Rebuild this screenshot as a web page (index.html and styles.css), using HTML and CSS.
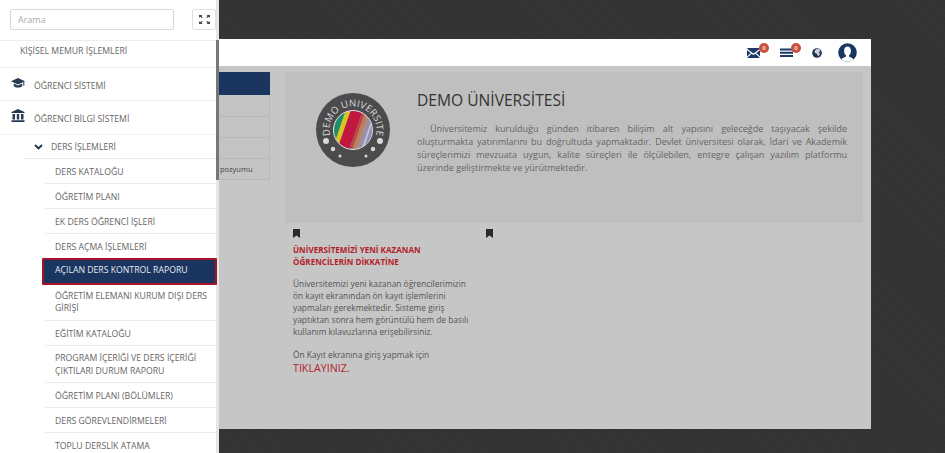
FILE: index.html
```html
<!DOCTYPE html>
<html lang="tr">
<head>
<meta charset="utf-8">
<title>Demo Üniversitesi</title>
<link rel="stylesheet" href="styles.css">
</head>
<body>
<div class="page">
  <header class="topbar">
    <span class="tool tool-mail">
      <svg width="13" height="10" viewBox="0 0 13 10"><path d="M0 .8 1 0h11l1 .8-6.500 4.700z" fill="#1b3a68"/><path d="M0 2.300l3.800 2.700L0 8.500zM13 2.300 9.200 5 13 8.500zM0 10 4.600 5.800l1.900 1.300 1.900-1.300L13 10z" fill="#1b3a68"/></svg>
      <b class="badge">0</b>
    </span>
    <span class="tool tool-list">
      <svg width="13" height="10" viewBox="0 0 13 10"><path d="M0 .5h13v2H0zM0 3.800h13v2H0zM0 7.100h13v2H0z" fill="#1b3a68"/></svg>
      <b class="badge badge-list">0</b>
    </span>
    <svg class="tool-globe" width="10" height="10" viewBox="0 0 10 10"><circle cx="5" cy="5" r="4.800" fill="#1f3350"/><path d="M4 1.200 7 .8l1.500 2L7 4.200l1 2-2 2.300-1-2.500-2-1L2.500 3z" fill="#c9ced6"/></svg>
    <svg class="tool-user" width="19" height="19" viewBox="0 0 19 19"><defs><clipPath id="av"><circle cx="9.500" cy="9.500" r="9.300"/></clipPath></defs><circle cx="9.500" cy="9.500" r="9.300" fill="#173663"/><g clip-path="url(#av)" fill="#fff"><ellipse cx="9.500" cy="8" rx="3.400" ry="4.600"/><path d="M8 11h3v2.500l4 2V19H4v-3.500l4-2z"/></g></svg>
  </header>
  <main class="content">
    <aside class="leftcol">
      <div class="lc-head"></div>
      <div class="lc-row lc-first"></div>
      <div class="lc-row"></div>
      <div class="lc-row"></div>
      <div class="lc-row lc-text">pozyumu</div>
    </aside>
    <div class="maincol">
      <section class="hero">
        <svg class="logo" width="74" height="74" viewBox="0 0 74 74">
          <defs>
            <clipPath id="inner"><circle cx="37" cy="37" r="19"/></clipPath>
            <path id="arc" d="M21.900 55A23.500 23.500 0 1 1 52.100 55"/>
          </defs>
          <circle cx="37" cy="37" r="37" fill="#4b4b4d"/>
          <text class="logo-text"><textPath href="#arc" startOffset="50%" text-anchor="middle">DEMO UNIVERSITE</textPath></text>
          <g clip-path="url(#inner)">
            <rect x="15" y="15" width="44" height="44" fill="#8f90bb"/>
            <path d="M14 14h17L15 60H0z" fill="#1c8f6a"/>
            <path d="M31 14h5L20 60h-5z" fill="#d7c61d"/>
            <path d="M36 14h12L32 60H20z" fill="#c3173f"/>
            <path d="M48 14h3L35 60h-3z" fill="#b5484a"/>
            <path d="M51 14h3L38 60h-3z" fill="#c97b45"/>
            <path d="M54 14h4L42 60h-4z" fill="#a98a8f"/>
            <path d="M60 14h2L46 60h-2z" fill="#c8c2cf"/>
          </g>
          <circle cx="37" cy="37" r="19.500" fill="none" stroke="#e5e5e5" stroke-width="1"/>
          <g fill="#d8d8d8"><circle cx="10" cy="48" r="3"/><circle cx="64" cy="48" r="3"/><circle cx="17" cy="56" r="2.200"/><circle cx="57" cy="56" r="2.200"/><circle cx="24" cy="63" r="1.500"/><circle cx="50" cy="63" r="1.500"/></g>
        </svg>
        <div class="hero-body">
          <h1 class="hero-title">DEMO ÜNİVERSİTESİ</h1>
          <p class="hero-text">
            <span class="line line-first">Üniversitemiz kurulduğu günden itibaren bilişim alt yapısını geleceğde taşıyacak şekilde</span>
            <span class="line">oluşturmakta yatırımlarını bu doğrultuda yapmaktadır. Devlet üniversitesi olarak, İdari ve Akademik</span>
            <span class="line">süreçlerimizi mevzuata uygun, kalite süreçleri ile ölçülebilen, entegre çalışan yazılım platformu</span>
            <span class="line line-last">üzerinde geliştirmekte ve yürütmektedir.</span>
          </p>
        </div>
      </section>
      <div class="news">
        <article class="news-col">
          <svg class="bookmark" width="7" height="9" viewBox="0 0 7 9"><path d="M0 0h7v9L3.500 6.500 0 9z" fill="#2a2a2a"/></svg>
          <h2 class="news-title">ÜNİVERSİTEMİZİ YENİ KAZANAN<br>ÖĞRENCİLERİN DİKKATİNE</h2>
          <p class="news-text">Üniversitemizi yeni kazanan öğrencilerimizin<br>ön kayıt ekranından ön kayıt işlemlerini<br>yapmaları gerekmektedir. Sisteme giriş<br>yaptıktan sonra hem görüntülü hem de basılı<br>kullanım kılavuzlarına erişebilirsiniz.</p>
          <p class="news-text news-last">Ön Kayıt ekranına giriş yapmak için</p>
          <a class="news-link">TIKLAYINIZ.</a>
        </article>
        <article class="news-col">
          <svg class="bookmark" width="7" height="9" viewBox="0 0 7 9"><path d="M0 0h7v9L3.500 6.500 0 9z" fill="#2a2a2a"/></svg>
        </article>
      </div>
    </div>
  </main>
</div>

<nav class="sidebar">
  <div class="scrolltrack"><div class="scrollthumb"></div></div>
  <div class="search-row">
    <input class="search" type="text" placeholder="Arama">
    <button class="expand" aria-label="Tam ekran">
      <svg width="11" height="9" viewBox="0 0 11 9"><path d="M0 0h3.500L2.500 1l1.200 1.200-.8.800L1 1.800 0 3zM11 0H7.500l1 1-1.200 1.200.8.800L10 1.800 11 3zM0 9h3.500l-1-1 1.200-1.200-.8-.8L1 7.200 0 6zM11 9H7.500l1-1-1.200-1.200.8-.8L10 7.200l1-1.200z" fill="#3f4750"/></svg>
    </button>
  </div>
  <div class="menu-top menu-plain">KİŞİSEL MEMUR İŞLEMLERİ</div>
  <div class="menu-top menu-sys">
    <svg class="menu-icon" width="14" height="11" viewBox="0 0 14 11"><path d="M7 0 0 3.200 7 6.400l7-3.200zM2.800 5.600v2.600C4 10 10 10 11.200 8.200V5.600L7 7.600z" fill="#263a50"/><path d="M12.800 3.800v4" stroke="#263a50"/></svg>
    <span>ÖĞRENCİ SİSTEMİ</span>
  </div>
  <div class="menu-top menu-bilgi">
    <svg class="menu-icon" width="14" height="13" viewBox="0 0 14 13"><path d="M7 0 .5 3v1h13V3zM1.500 5h2.500v5.500H1.500zM5.800 5h2.400v5.500H5.800zM10 5h2.500v5.500H10zM.5 11.300h13V13H.5z" fill="#263a50"/></svg>
    <span>ÖĞRENCİ BİLGİ SİSTEMİ</span>
  </div>
  <div class="menu-group">
    <svg width="9" height="6" viewBox="0 0 9 6"><path d="M1 1l3.500 3.500L8 1" fill="none" stroke="#1f3350" stroke-width="1.800"/></svg>
    <span>DERS İŞLEMLERİ</span>
  </div>
  <ul class="submenu">
    <li class="sub">DERS KATALOĞU</li>
    <li class="sub">ÖĞRETİM PLANI</li>
    <li class="sub">EK DERS ÖĞRENCİ İŞLERİ</li>
    <li class="sub">DERS AÇMA İŞLEMLERİ</li>
    <li class="sub active">AÇILAN DERS KONTROL RAPORU</li>
    <li class="sub sub-two">ÖĞRETİM ELEMANI KURUM DIŞI DERS GİRİŞİ</li>
    <li class="sub">EĞİTİM KATALOĞU</li>
    <li class="sub sub-two sub-tall">PROGRAM İÇERİĞİ VE DERS İÇERİĞİ ÇIKTILARI DURUM RAPORU</li>
    <li class="sub">ÖĞRETİM PLANI (BÖLÜMLER)</li>
    <li class="sub">DERS GÖREVLENDİRMELERİ</li>
    <li class="sub">TOPLU DERSLİK ATAMA</li>
  </ul>
</nav>
</body>
</html>
```
FILE: styles.css
```css
* { box-sizing: border-box; }
html, body { height: 100%; }
body {
  margin: 0;
  height: 453px;
  overflow: hidden;
  background-color: #333;
  background-image: repeating-linear-gradient(45deg, rgba(255,255,255,.012) 0 2px, transparent 2px 4px);
  font-family: "Open Sans", sans-serif;
  color: #555;
  padding: 39px 74px 24px;
}
.page {
  height: 390px;
  display: flex;
  flex-direction: column;
  background: #c6c6c6;
}
.topbar {
  height: 27px;
  flex: none;
  background: #fff;
  display: flex;
  align-items: center;
  justify-content: flex-end;
  padding-right: 14px;
}
.tool { position: relative; display: flex; }
.tool-mail { margin-right: 20px; }
.tool-list { margin-right: 19px; }
.tool-globe { margin-right: 16px; }
.badge {
  position: absolute;
  left: 12px;
  top: -5px;
  width: 10px;
  height: 10px;
  border-radius: 50%;
  background: #c94f3d;
  color: #f4d9d4;
  font: 700 6px/10px "Open Sans", sans-serif;
  text-align: center;
}
.badge-list { left: 11px; }
.content {
  flex: 1;
  display: flex;
  gap: 15px;
  padding: 6px 8px 0;
  min-height: 0;
}
.leftcol { width: 188px; flex: none; }
.lc-head { height: 23px; background: #1a3560; }
.lc-row {
  height: 21px;
  background: #c4c4c4;
  border-bottom: 1px solid #b8b8b8;
  border-right: 1px solid #b8b8b8;
  font-size: 7.500px;
  line-height: 21px;
  color: #444;
}
.lc-first { height: 22px; }
.lc-text { padding-left: 138px; }
.maincol { flex: 1; min-width: 0; }
.hero {
  height: 151px;
  background: #bfbfbf;
  display: flex;
  padding: 21px 16px 0 31px;
  gap: 27px;
}
.logo { flex: none; }
.logo-text { font: 400 9.600px "Open Sans", sans-serif; fill: #dcdcdc; letter-spacing: .1px; }
.hero-body { flex: 1; min-width: 0; margin-top: -1px; }
.hero-title {
  margin: 0;
  font: 400 15.600px/16px "Open Sans", sans-serif;
  color: #333;
  white-space: nowrap;
}
.hero-text {
  margin: 14px 0 0;
  font-size: 9px;
  line-height: 13px;
  color: #666;
}
.line { display: block; text-align: justify; text-align-last: justify; white-space: normal; }
.line-first { text-indent: 13px; }
.line-last { text-align-last: left; }
.news { display: flex; padding: 6px 8px 0; }
.news-col { width: 193px; padding-right: 10px; }
.bookmark { display: block; margin-bottom: 6px; }
.news-title {
  margin: 0 0 10px;
  font: 700 8.100px/12px "Open Sans", sans-serif;
  color: #b3222c;
}
.news-text {
  margin: 0;
  font-size: 8.400px;
  line-height: 12px;
  color: #555;
  white-space: nowrap;
}
.news-last { margin-top: 11px; }
.news-link { display: block; font-size: 10.700px; line-height: 14px; color: #b3222c; }

.sidebar {
  position: absolute;
  left: 0;
  top: 0;
  width: 219px;
  height: 453px;
  padding-right: 3px;
  background: #fff;
  overflow: hidden;
  font-size: 8.700px;
  color: #666;
}
.scrolltrack {
  position: absolute;
  right: 0;
  top: 0;
  bottom: 0;
  width: 3px;
  background: #e6e6e6;
}
.scrollthumb {
  margin-top: 40px;
  height: 140px;
  background: #777;
}
.search-row {
  height: 41px;
  padding: 9px 0 0 10px;
  display: flex;
  gap: 18px;
  border-bottom: 1px solid #eee;
}
.search {
  width: 164px;
  height: 21px;
  border: 1px solid #d9d9d9;
  border-radius: 2px;
  padding: 0 7px;
  font: 9px "Open Sans", sans-serif;
  outline: none;
}
.search::placeholder { color: #aaa; opacity: 1; }
.expand {
  width: 24px;
  height: 21px;
  padding: 0;
  border: 1px solid #e0e0e0;
  border-radius: 2px;
  background: #fff;
  display: flex;
  align-items: center;
  justify-content: center;
}
.menu-top {
  display: flex;
  align-items: center;
  border-bottom: 1px solid #f0f0f0;
}
.menu-plain { height: 27px; padding-left: 20px; padding-bottom: 7px; }
.menu-sys { height: 33px; padding-left: 11px; padding-top: 4px; }
.menu-bilgi { height: 34px; padding-left: 11px; padding-top: 2px; }
.menu-icon { margin-right: 9px; flex: none; position: relative; top: -3px; }
.menu-group {
  height: 24px;
  margin-left: 24px;
  padding-left: 10px;
  display: flex;
  align-items: center;
  gap: 8px;
  border-bottom: 1px solid #ececec;
}
.submenu { list-style: none; margin: 0; padding: 0 0 0 45px; }
.sub {
  padding: 7px 4px 5px 10px;
  line-height: 12px;
  border-bottom: 1px solid #ececec;
}
.sub-two { padding-top: 5px; padding-bottom: 6px; }
.sub-tall { padding-top: 6px; line-height: 12.500px; padding-bottom: 5px; }
.active {
  position: relative;
  background: #1a3560;
  color: #e8ebf0;
  margin: -1px -1px 0 -3px;
  padding: 4px 4px 6px 11px;
  border: 2px solid #a5152a;
  border-radius: 1px;
  line-height: 13px;
}
```
